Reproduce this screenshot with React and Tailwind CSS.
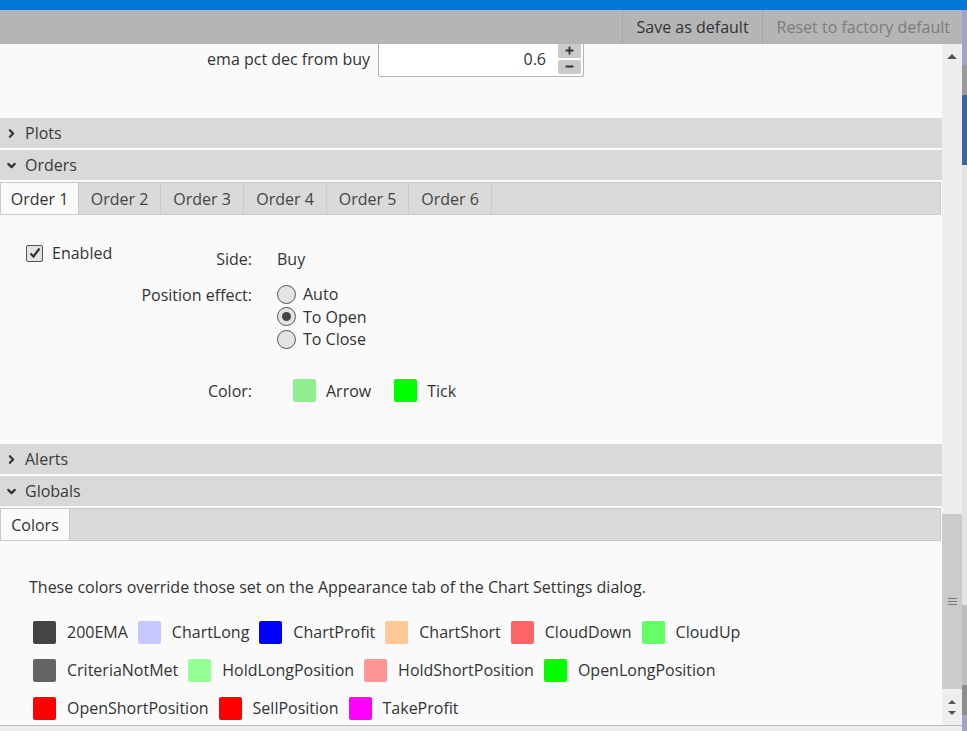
import React from 'react';
import { ChevronRight, ChevronDown, Plus, Minus } from 'lucide-react';

const COLOR_ROWS = [
  [
    ['200EMA', '#444444'],
    ['ChartLong', '#c8c8ff'],
    ['ChartProfit', '#0000ff'],
    ['ChartShort', '#ffc896'],
    ['CloudDown', '#ff6464'],
    ['CloudUp', '#64ff64'],
  ],
  [
    ['CriteriaNotMet', '#646464'],
    ['HoldLongPosition', '#96ff96'],
    ['HoldShortPosition', '#ff9696'],
    ['OpenLongPosition', '#00ff00'],
  ],
  [
    ['OpenShortPosition', '#ff0000'],
    ['SellPosition', '#ff0000'],
    ['TakeProfit', '#ff00ff'],
  ],
];

const ORDER_TABS = [
  ['Order 1', 'w-[78px]'],
  ['Order 2', 'w-[82px]'],
  ['Order 3', 'w-[83px]'],
  ['Order 4', 'w-[83px]'],
  ['Order 5', 'w-[82px]'],
  ['Order 6', 'w-[83px]'],
];

function SectionHeader({ title, open }) {
  return (
    <div className="h-[30px] mb-[2px] bg-[#d9d9d9] flex items-center pl-[5px] gap-[7px] text-[16px] text-[#3a3a3a]">
      {open
        ? <ChevronDown size={13} strokeWidth={4} className="text-[#333]" />
        : <ChevronRight size={13} strokeWidth={4} className="text-[#333]" />}
      <span>{title}</span>
    </div>
  );
}

function Tabs({ items, active = 0 }) {
  return (
    <div className="h-[33px] flex bg-[#dadada] border border-[#c9c9c9] mr-[1px]">
      {items.map(([t, w], i) => (
        <div
          key={t}
          className={`h-full flex items-center justify-center border-r border-[#c9c9c9] text-[16px] ${w} ${i === active ? 'bg-[#fafafa] text-[#333]' : 'text-[#444]'}`}
        >
          {t}
        </div>
      ))}
    </div>
  );
}

function Radio({ label, checked }) {
  return (
    <div className="flex items-center gap-[7px] h-[22.5px]">
      <span className="w-[19px] h-[19px] rounded-full border border-[#555] bg-[#e4e4e4] flex items-center justify-center">
        {checked && <span className="w-[9px] h-[9px] rounded-full bg-[#444]" />}
      </span>
      <span>{label}</span>
    </div>
  );
}

function Scrollbar() {
  return (
    <div className="w-[20px] bg-[#eeeeee] flex flex-col">
      <div className="h-[24px] flex items-center justify-center">
        <span className="w-0 h-0 border-l-[5px] border-r-[5px] border-b-[5px] border-l-transparent border-r-transparent border-b-[#555]" />
      </div>
      <div className="flex-1" />
      <div className="h-[175px] bg-[#cbcbcb] flex flex-col items-center justify-center gap-[2px]">
        <span className="w-[9px] h-[1px] bg-[#777]" />
        <span className="w-[9px] h-[1px] bg-[#777]" />
        <span className="w-[9px] h-[1px] bg-[#777]" />
      </div>
      <div className="h-[36px] flex flex-col items-center justify-center gap-[7px]">
        <span className="w-0 h-0 border-l-[4px] border-r-[4px] border-b-[4px] border-l-transparent border-r-transparent border-b-[#555]" />
        <span className="w-0 h-0 border-l-[4px] border-r-[4px] border-t-[4px] border-l-transparent border-r-transparent border-t-[#555]" />
      </div>
    </div>
  );
}

export default function App() {
  return (
    <div
      className="w-[967px] h-[731px] overflow-hidden flex bg-[#fafafa] text-[#333]"
      style={{ fontFamily: '"Open Sans", "Noto Sans", sans-serif' }}
    >
      <div className="w-[962px] flex flex-col">
        {/* title strip */}
        <div className="h-[10px] bg-[#0078d7]" />

        {/* toolbar */}
        <div className="h-[34px] bg-[#b5b5b5] flex justify-end pr-[5px] text-[16px]">
          <button className="pl-[14px] pr-[13px] border-l border-[#a5a5a5] text-[#333]">Save as default</button>
          <button className="pl-[14px] pr-[7px] border-l border-[#a5a5a5] text-[#7c7c7c]">Reset to factory default</button>
        </div>

        <div className="flex-1 flex min-h-0">
          <div className="flex-1 overflow-hidden flex flex-col">
            {/* ema row (scrolled, top cut) */}
            <div className="h-[75px] flex items-start -mt-[1px] text-[16px]">
              <div className="w-[370px] text-right pt-[4px] text-[#333]">ema pct dec from buy</div>
              <div className="ml-[8px] w-[206px] h-[34px] border border-t-0 border-[#b4b4b4] rounded-b-[3px] bg-white flex">
                <div className="flex-1 text-right pr-[12px] pt-[4px]">0.6</div>
                <div className="w-[25px] flex flex-col gap-[2px] pr-[2px] pb-[2px]">
                  <div className="flex-1 bg-[#cacaca] flex items-center justify-center">
                    <Plus size={11} strokeWidth={4} className="text-[#333]" />
                  </div>
                  <div className="flex-1 bg-[#cacaca] rounded-[2px] flex items-center justify-center">
                    <Minus size={11} strokeWidth={4} className="text-[#333]" />
                  </div>
                </div>
              </div>
            </div>

            <SectionHeader title="Plots" />
            <SectionHeader title="Orders" open />
            <Tabs items={ORDER_TABS} />

            {/* order content */}
            <div className="h-[229px] flex text-[16px]">
              <div className="w-[120px] pl-[26px] pt-[26px]">
                <div className="flex items-center gap-[9px]">
                  <span className="w-[17px] h-[17px] border border-[#555] rounded-[2px] bg-[#e4e4e4] flex items-center justify-center">
                    <svg width="13" height="13" viewBox="0 0 13 13">
                      <path d="M2.5 6.5 L5.5 9.5 L11.5 1.5" fill="none" stroke="#333" strokeWidth="2.2" />
                    </svg>
                  </span>
                  <span>Enabled</span>
                </div>
              </div>
              <div className="flex flex-col pt-[32px]">
                <div className="flex">
                  <div className="w-[132px] text-right">Side:</div>
                  <div className="pl-[25px]">Buy</div>
                </div>
                <div className="flex mt-[12px]">
                  <div className="w-[132px] text-right">Position effect:</div>
                  <div className="pl-[25px] flex flex-col">
                    <Radio label="Auto" />
                    <Radio label="To Open" checked />
                    <Radio label="To Close" />
                  </div>
                </div>
                <div className="flex items-center mt-[28px]">
                  <div className="w-[132px] text-right">Color:</div>
                  <div className="pl-[41px] flex items-center">
                    <span className="w-[23px] h-[23px] rounded-[2px] bg-[#90ee90]" />
                    <span className="ml-[10px]">Arrow</span>
                    <span className="ml-[23px] w-[23px] h-[23px] rounded-[2px] bg-[#00ff00]" />
                    <span className="ml-[10px]">Tick</span>
                  </div>
                </div>
              </div>
            </div>

            <SectionHeader title="Alerts" />
            <SectionHeader title="Globals" open />
            <Tabs items={[['Colors', 'w-[69px]']]} />

            {/* globals colors */}
            <div className="flex-1 text-[16px] pt-[34px]">
              <p className="pl-[29px]">These colors override those set on the Appearance tab of the Chart Settings dialog.</p>
              <div className="pl-[33px] pt-[21px] flex flex-col gap-[14px]">
                {COLOR_ROWS.map((row, ri) => (
                  <div key={ri} className="flex items-center h-[24px]">
                    {row.map(([name, color]) => (
                      <div key={name} className="flex items-center mr-[10px]">
                        <span className="w-[23px] h-[23px] rounded-[2px]" style={{ backgroundColor: color }} />
                        <span className="ml-[11px]">{name}</span>
                      </div>
                    ))}
                  </div>
                ))}
              </div>
            </div>
          </div>
          <Scrollbar />
        </div>

        <div className="h-[6px] border-t border-[#b8b8b8] bg-[#eeeeee]" />
      </div>

      {/* background window edge */}
      <div className="w-[5px] flex flex-col">
        <div className="h-[10px] bg-[#0078d7]" />
        <div className="h-[55px] bg-[#a39fd0]" />
        <div className="h-[30px] bg-[#9a9a9a]" />
        <div className="h-[70px] bg-[#2f6aa6]" />
        <div className="flex-1 bg-[#e3e3e3]" />
        <div className="h-[80px] bg-[#bdbdbd]" />
        <div className="h-[30px] bg-[#8d8d8d]" />
        <div className="h-[16px] bg-[#a39fd0]" />
      </div>
    </div>
  );
}
